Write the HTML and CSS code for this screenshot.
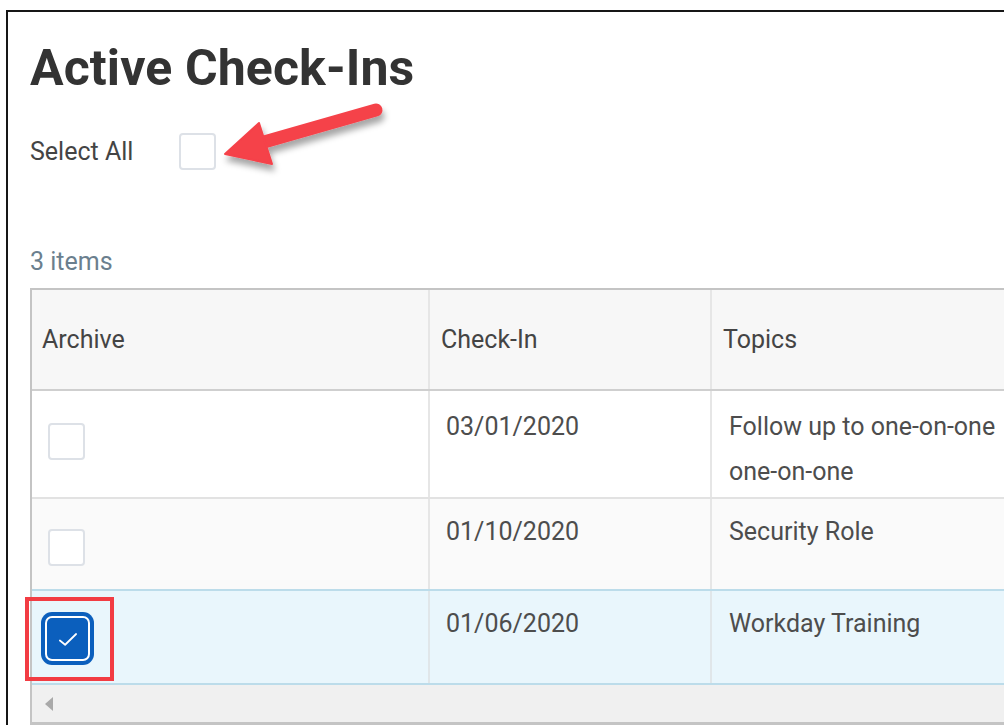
FILE: index.html
```html
<!DOCTYPE html>
<html lang="en">
<head>
<meta charset="utf-8">
<title>Active Check-Ins</title>
<link rel="stylesheet" href="styles.css">
</head>
<body>
<div class="frame">
  <h1 class="title">Active Check-Ins</h1>
  <div class="select-all">
    <span class="select-label">Select All</span>
    <span class="checkbox"></span>
  </div>
  <div class="count">3 items</div>
  <div class="grid">
    <div class="row head">
      <div class="cell">Archive</div>
      <div class="cell">Check-In</div>
      <div class="cell">Topics</div>
    </div>
    <div class="row first">
      <div class="cell box-cell"><span class="checkbox"></span></div>
      <div class="cell date">03/01/2020</div>
      <div class="cell topic">Follow up to one-on-one<br>one-on-one</div>
    </div>
    <div class="row alt">
      <div class="cell box-cell"><span class="checkbox"></span></div>
      <div class="cell date">01/10/2020</div>
      <div class="cell topic">Security Role</div>
    </div>
    <div class="row selected">
      <div class="cell box-cell">
        <span class="checkbox checked">
          <svg viewBox="0 0 24 24" width="30" height="30"><path d="M5.5 13.2l4.2 3.4L18.5 8" fill="none" stroke="#fff" stroke-width="1.4" stroke-linecap="round" stroke-linejoin="round"/></svg>
        </span>
        <span class="callout"></span>
      </div>
      <div class="cell date">01/06/2020</div>
      <div class="cell topic">Workday Training</div>
    </div>
    <div class="scrollbar"><span class="arrow-left"></span></div>
  </div>
</div>
<svg class="pointer" width="1004" height="725" viewBox="0 0 1004 725">
  <defs>
    <filter id="shade" x="-20%" y="-20%" width="140%" height="160%">
      <feDropShadow dx="2" dy="6" stdDeviation="3" flood-color="#000" flood-opacity="0.35"/>
    </filter>
  </defs>
  <g filter="url(#shade)" fill="#f5424a" stroke="#f5424a">
    <line x1="264" y1="142" x2="376" y2="110" stroke-width="13" stroke-linecap="round"/>
    <polygon points="225,154 259,123 272,164" stroke-width="2" stroke-linejoin="round"/>
  </g>
</svg>
</body>
</html>
```
FILE: styles.css
```css
html, body {
  margin: 0;
  padding: 0;
  background: #fff;
}

body {
  position: relative;
  width: 1004px;
  height: 725px;
  overflow: hidden;
  font-family: Roboto, "Liberation Sans", sans-serif;
  color: #4a4a4a;
}

.frame {
  margin: 10px 0 0 6px;
  height: 715px;
  border-top: 2px solid #161616;
  border-left: 2px solid #161616;
  padding-left: 22px;
  overflow: hidden;
  box-sizing: border-box;
}

.title {
  margin: 0;
  padding-top: 28px;
  font-size: 50px;
  line-height: 56px;
  font-weight: 700;
  color: #333;
  letter-spacing: 0.1px;
}

.select-all {
  display: flex;
  align-items: center;
  gap: 46px;
  margin-top: 37px;
}

.select-label {
  font-size: 25px;
  color: #444;
}

.checkbox {
  display: inline-flex;
  align-items: center;
  justify-content: center;
  width: 37px;
  height: 37px;
  box-sizing: border-box;
  border: 2px solid #dde1e7;
  border-radius: 4px;
  background: #fff;
}

.count {
  margin-top: 77px;
  font-size: 25px;
  color: #6b7f8e;
  line-height: 30px;
}

.grid {
  margin-top: 11px;
  width: 1100px;
  border: 2px solid #c4c4c4;
  border-right: none;
}

.row {
  display: grid;
  grid-template-columns: 396px 282px 1fr;
  border-bottom: 2px solid #e2e2e2;
  background: #fff;
}

.cell {
  padding: 13px 0 0 16px;
  font-size: 25px;
  line-height: 45px;
  color: #4d4d4d;
  border-left: 2px solid #e6e6e6;
  box-sizing: border-box;
}

.row .cell:first-child {
  border-left: none;
}

.cell.topic {
  padding-left: 17px;
}

.row.head {
  background: #f7f7f7;
  border-bottom-color: #cfcfcf;
  height: 99px;
}

.row.head .cell {
  display: flex;
  align-items: center;
  padding-top: 0;
  padding-left: 10px;
  color: #444;
}

.row.head .cell + .cell {
  padding-left: 11px;
}

.row.first {
  min-height: 106px;
}

.row.alt {
  background: #fafafa;
  min-height: 90px;
  border-bottom-color: #bcdcea;
}

.row.alt .cell,
.row.selected .cell {
  padding-top: 10px;
}

.row.selected {
  background: #e9f6fc;
  min-height: 92px;
  border-bottom-color: #bcdcea;
}

.row.selected .cell {
  border-left-color: #e0e6e9;
}

.box-cell {
  position: relative;
}

.row.first .box-cell {
  padding-top: 32px;
}

.row.alt .box-cell {
  padding-top: 30px;
}

.row.selected .box-cell {
  padding-top: 27px;
  padding-left: 15px;
}

.checkbox.checked {
  width: 41px;
  height: 41px;
  border: none;
  border-radius: 5px;
  background: #0b5fbd;
  box-shadow: 0 0 0 2px #fff, 0 0 0 6px #0b5fbd;
}

/* annotation frame around the selected checkbox */
.callout {
  position: absolute;
  left: -7px;
  top: 6px;
  width: 89px;
  height: 84px;
  border: 4px solid #f23c43;
  box-sizing: border-box;
}

.scrollbar {
  height: 37px;
  background: #f0f0f0;
  border-bottom: 2px solid #c4c4c4;
  display: flex;
  align-items: center;
  padding-left: 13px;
}

.arrow-left {
  width: 0;
  height: 0;
  border-top: 7px solid transparent;
  border-bottom: 7px solid transparent;
  border-right: 8px solid #a9a9a9;
}

.pointer {
  position: absolute;
  left: 0;
  top: 0;
  pointer-events: none;
}
```
